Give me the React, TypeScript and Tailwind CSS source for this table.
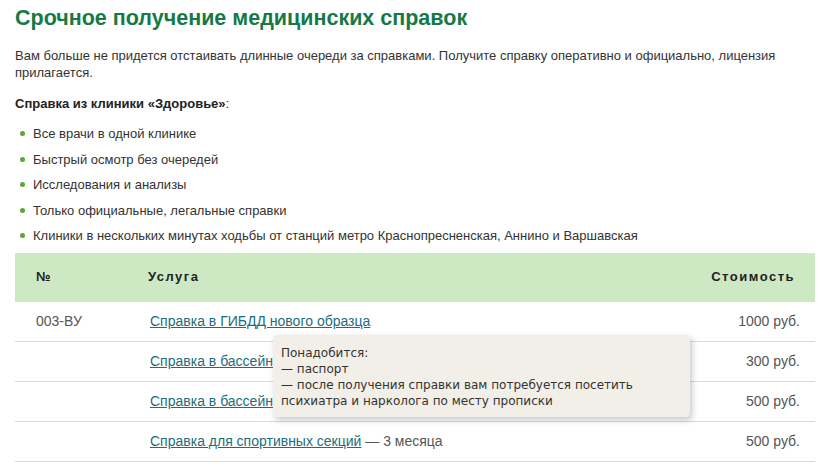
const features = [
  'Все врачи в одной клинике',
  'Быстрый осмотр без очередей',
  'Исследования и анализы',
  'Только официальные, легальные справки',
  'Клиники в нескольких минутах ходьбы от станций метро Краснопресненская, Аннино и Варшавская',
];

const services = [
  { code: '003-ВУ', name: 'Справка в ГИБДД нового образца', note: '', price: '1000 руб.' },
  { code: '', name: 'Справка в бассейн', note: '', price: '300 руб.' },
  { code: '', name: 'Справка в бассейн', note: '', price: '500 руб.' },
  { code: '', name: 'Справка для спортивных секций', note: ' — 3 месяца', price: '500 руб.' },
];

export default function App() {
  return (
    <div className="w-[826px] h-[469px] overflow-hidden bg-white font-['Liberation_Sans',Arial,sans-serif] text-[13px] text-[#333]">
      <div className="w-[800px] ml-[15px]">
        {/* Title */}
        <h1 className="pt-[5px] text-[21.5px] leading-[26px] font-bold text-[#157a45]">
          Срочное получение медицинских справок
        </h1>

        {/* Intro */}
        <p className="mt-[16px] leading-[17px]">
          Вам больше не придется отстаивать длинные очереди за справками. Получите справку оперативно и официально, лицензия прилагается.
        </p>
        <p className="mt-[14px] leading-[17px] font-bold text-[#222]">
          Справка из клиники «Здоровье»<span className="font-normal">:</span>
        </p>

        {/* Features */}
        <ul className="mt-[9px]">
          {features.map((f) => (
            <li key={f} className="h-[25.5px] flex items-center">
              <span className="w-[5px] h-[5px] rounded-full bg-[#5aa835] ml-[5px] mr-[13px]" />
              <span className="-ml-[5px]">{f}</span>
            </li>
          ))}
        </ul>

        {/* Price table */}
        <div className="relative mt-[4px]">
          <div className="h-[49px] flex items-center bg-[#cde9c3] font-bold tracking-[1.5px] text-[#222]">
            <div className="w-[133px] pl-[21px]">№</div>
            <div className="flex-1">Услуга</div>
            <div className="pr-[20px]">Стоимость</div>
          </div>
          {services.map((s, i) => (
            <div key={i} className="h-[40px] flex items-center border-b border-[#d9d9d9] text-[14px] text-[#555]">
              <div className="w-[135px] pl-[21px]">{s.code}</div>
              <div className="flex-1">
                <a href="#" className="underline text-[#1c6e7e]">{s.name}</a>
                {s.note}
              </div>
              <div className="pr-[15px]">{s.price}</div>
            </div>
          ))}

          {/* Tooltip */}
          <div className="absolute left-[258px] top-[82px] w-[417px] h-[82px] rounded-[4px] bg-[#f2efe8] shadow-[2px_3px_6px_rgba(0,0,0,0.22)] px-[8px] pt-[10px] font-['DejaVu_Sans',Verdana,sans-serif] text-[12px] leading-[16px] text-[#333]">
            <div>Понадобится:</div>
            <div>— паспорт</div>
            <div>— после получения справки вам потребуется посетить</div>
            <div>психиатра и нарколога по месту прописки</div>
          </div>
        </div>
      </div>
    </div>
  );
}
